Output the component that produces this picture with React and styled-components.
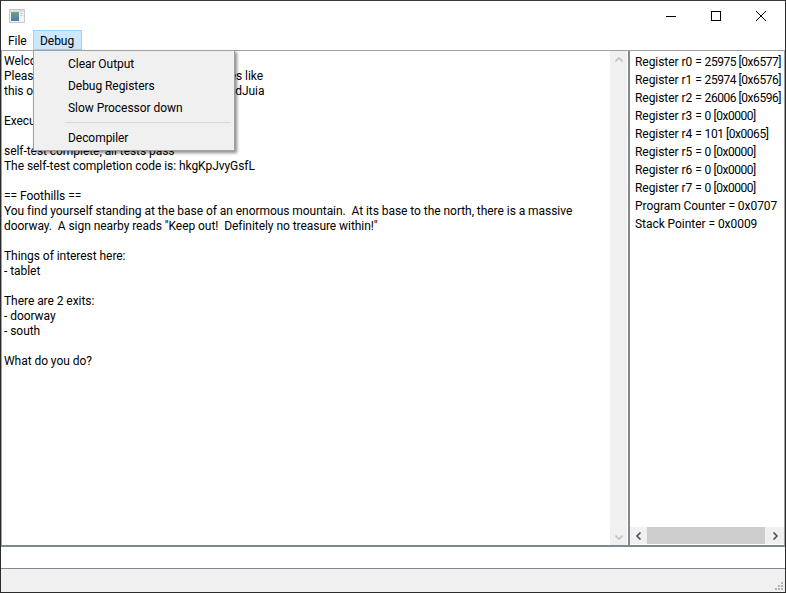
import React from 'react';
import styled, { createGlobalStyle } from 'styled-components';

const GlobalStyle = createGlobalStyle`
  html, body {
    margin: 0;
    padding: 0;
    background: #fff;
  }
  * {
    box-sizing: border-box;
  }
`;

const Window = styled.div`
  position: relative;
  width: 786px;
  height: 593px;
  display: flex;
  flex-direction: column;
  background: #f0f0f0;
  border: 1px solid #2b2b2b;
  border-top-color: #3a3a3a;
  font-family: Roboto, "Noto Sans", sans-serif;
  font-size: 12px;
  letter-spacing: -0.05px;
  color: #000;
  overflow: hidden;
`;

const TitleBar = styled.div`
  height: 29px;
  flex: none;
  display: flex;
  align-items: center;
  justify-content: space-between;
  background: #fff;
  padding-left: 8px;
`;

const WindowButtons = styled.div`
  display: flex;
  margin-right: 2px;
`;

const WindowButton = styled.div`
  width: 45px;
  height: 29px;
  display: flex;
  align-items: center;
  justify-content: center;
`;

const MenuBar = styled.div`
  height: 21px;
  flex: none;
  display: flex;
  background: #fff;
  border-bottom: 1px solid #a0a0a0;
`;

const MenuTitle = styled.div`
  height: 20px;
  width: ${p => p.$width}px;
  padding-left: 6px;
  line-height: 20px;
  border: 1px solid ${p => (p.$open ? '#99d1ff' : 'transparent')};
  background: ${p => (p.$open ? '#cce8ff' : 'transparent')};
`;

const Content = styled.div`
  flex: 1;
  min-height: 0;
  display: flex;
`;

const OutputPane = styled.div`
  flex: 1;
  display: flex;
  padding-right: 1px;
  background: #fff;
  border-left: 1px solid #a0a0a0;
  border-bottom: 2px solid #828790;
`;

const OutputText = styled.pre`
  flex: 1;
  margin: 0;
  padding: 3px 2px;
  font: inherit;
  line-height: 15px;
  white-space: pre-wrap;
`;

const VScroll = styled.div`
  width: 17px;
  flex: none;
  display: flex;
  flex-direction: column;
  justify-content: space-between;
  align-items: center;
  background: #f0f0f0;
`;

const ScrollArrow = styled.div`
  width: ${p => p.$width || 17}px;
  height: 17px;
  flex: none;
  display: flex;
  align-items: center;
  justify-content: center;
`;

const RegisterPane = styled.div`
  width: 157px;
  flex: none;
  display: flex;
  flex-direction: column;
  background: #fff;
  border-left: 2px solid #828790;
  border-right: 1px solid #a0a0a0;
  border-bottom: 2px solid #828790;
`;

const RegisterList = styled.div`
  flex: 1;
  padding: 2px 0 0 5px;
`;

const RegisterLine = styled.div`
  height: 18px;
  line-height: 18px;
  white-space: nowrap;
`;

const RegisterValue = styled.span`
  letter-spacing: -0.45px;
`;

const HScroll = styled.div`
  height: 17px;
  flex: none;
  margin-bottom: 1px;
  display: flex;
  align-items: stretch;
  background: #f0f0f0;
`;

const HThumb = styled.div`
  flex: 1;
  background: #cdcdcd;
`;

const InputBox = styled.div`
  height: 22px;
  flex: none;
  background: #fff;
  border-bottom: 1px solid #828790;
`;

const StatusBar = styled.div`
  height: 23px;
  flex: none;
  display: flex;
  justify-content: flex-end;
  align-items: flex-end;
  padding: 0 1px 1px 0;
  background: #f0f0f0;
`;

const Menu = styled.div`
  position: absolute;
  left: 32px;
  top: 49px;
  width: 202px;
  height: 101px;
  padding: 2px;
  background: #f0f0f0;
  border: 1px solid #a0a0a0;
  box-shadow: 2px 2px 3px rgba(0, 0, 0, 0.45);
`;

const MenuItem = styled.div`
  height: 22px;
  line-height: 22px;
  padding-left: 32px;
`;

const MenuSeparator = styled.div`
  height: 1px;
  margin: 3px 1px 4px 29px;
  background: #d7d7d7;
`;

const AppIcon = () => (
  <svg width="16" height="14" viewBox="0 0 16 14">
    <defs>
      <linearGradient id="paneFill" x1="0" y1="0" x2="0" y2="1">
        <stop offset="0" stopColor="#6f9f8c" />
        <stop offset="1" stopColor="#4a79b0" />
      </linearGradient>
    </defs>
    <rect x="0.5" y="0.5" width="15" height="13" fill="#f4f4f4" stroke="#c8c8c8" />
    <rect x="1" y="1" width="14" height="2" fill="#dedede" />
    <rect x="2" y="3" width="8" height="9" fill="url(#paneFill)" />
    <rect x="11" y="4" width="3" height="1" fill="#b9cbd2" />
    <rect x="11" y="6" width="3" height="1" fill="#d0d0d0" />
  </svg>
);

const Chevron = ({ dir, color, size = 8 }) => {
  const points = {
    up: '0.5,5.5 4,2 7.5,5.5',
    down: '0.5,2.5 4,6 7.5,2.5',
    left: '5.5,0.5 2,4 5.5,7.5',
    right: '2.5,0.5 6,4 2.5,7.5',
  };
  return (
    <svg width={size} height={size} viewBox="0 0 8 8">
      <polyline points={points[dir]} fill="none" stroke={color} strokeWidth="1.6" />
    </svg>
  );
};

const Grip = () => (
  <svg width="10" height="10" viewBox="0 0 10 10" fill="#b4b4b4">
    <rect x="7" y="1" width="2" height="2" />
    <rect x="4" y="4" width="2" height="2" />
    <rect x="7" y="4" width="2" height="2" />
    <rect x="1" y="7" width="2" height="2" />
    <rect x="4" y="7" width="2" height="2" />
    <rect x="7" y="7" width="2" height="2" />
  </svg>
);

const output = `Welcome to the Synacor Challenge!
Please record your progress by putting codes like
this one into the challenge website: KfQzXlodJuia

Executing self-test...

self-test complete, all tests pass
The self-test completion code is: hkgKpJvyGsfL

== Foothills ==
You find yourself standing at the base of an enormous mountain.  At its base to the north, there is a massive
doorway.  A sign nearby reads "Keep out!  Definitely no treasure within!"

Things of interest here:
- tablet

There are 2 exits:
- doorway
- south

What do you do?`;

const registers = [
  ['Register r0 = ', '25975 [0x6577]'],
  ['Register r1 = ', '25974 [0x6576]'],
  ['Register r2 = ', '26006 [0x6596]'],
  ['Register r3 = ', '0 [0x0000]'],
  ['Register r4 = ', '101 [0x0065]'],
  ['Register r5 = ', '0 [0x0000]'],
  ['Register r6 = ', '0 [0x0000]'],
  ['Register r7 = ', '0 [0x0000]'],
];

export default function App() {
  return (
    <Window>
      <GlobalStyle />
      <TitleBar>
        <AppIcon />
        <WindowButtons>
          <WindowButton>
            <svg width="10" height="10" viewBox="0 0 10 10">
              <rect x="0" y="5" width="10" height="1" fill="#000" />
            </svg>
          </WindowButton>
          <WindowButton>
            <svg width="10" height="10" viewBox="0 0 10 10">
              <rect x="0.5" y="0.5" width="9" height="9" fill="none" stroke="#000" />
            </svg>
          </WindowButton>
          <WindowButton>
            <svg width="10" height="10" viewBox="0 0 10 10">
              <path d="M0 0L10 10M10 0L0 10" stroke="#000" strokeWidth="1" />
            </svg>
          </WindowButton>
        </WindowButtons>
      </TitleBar>
      <MenuBar>
        <MenuTitle $width={32}>File</MenuTitle>
        <MenuTitle $width={49} $open>Debug</MenuTitle>
      </MenuBar>
      <Content>
        <OutputPane>
          <OutputText>{output}</OutputText>
          <VScroll>
            <ScrollArrow><Chevron dir="up" color="#c2c2c2" /></ScrollArrow>
            <ScrollArrow><Chevron dir="down" color="#c2c2c2" /></ScrollArrow>
          </VScroll>
        </OutputPane>
        <RegisterPane>
          <RegisterList>
            {registers.map(([label, value]) => (
              <RegisterLine key={label}>{label}<RegisterValue>{value}</RegisterValue></RegisterLine>
            ))}
            <RegisterLine>Program Counter = 0x0707</RegisterLine>
            <RegisterLine>Stack Pointer = 0x0009</RegisterLine>
          </RegisterList>
          <HScroll>
            <ScrollArrow><Chevron dir="left" color="#505050" /></ScrollArrow>
            <HThumb />
            <ScrollArrow $width={19}><Chevron dir="right" color="#505050" /></ScrollArrow>
          </HScroll>
        </RegisterPane>
      </Content>
      <InputBox />
      <StatusBar><Grip /></StatusBar>
      <Menu>
        <MenuItem>Clear Output</MenuItem>
        <MenuItem>Debug Registers</MenuItem>
        <MenuItem>Slow Processor down</MenuItem>
        <MenuSeparator />
        <MenuItem>Decompiler</MenuItem>
      </Menu>
    </Window>
  );
}
